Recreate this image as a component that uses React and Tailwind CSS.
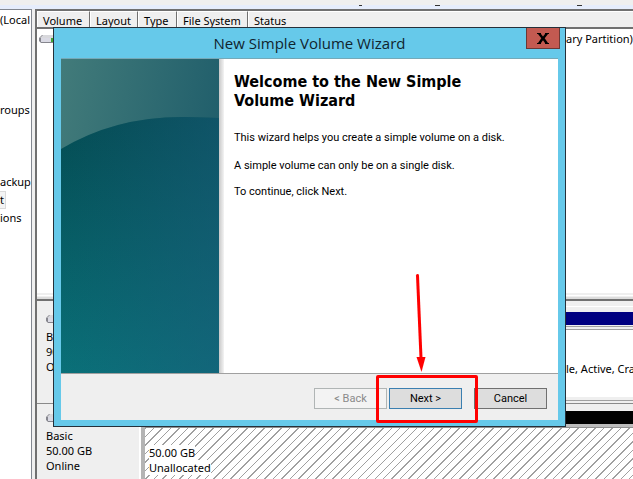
import React from "react";

const columns = [
  { label: "Volume", width: "w-[53px]" },
  { label: "Layout", width: "w-[48px]" },
  { label: "Type", width: "w-[39px]" },
  { label: "File System", width: "w-[71px]" },
];

const treeRows = ["(Local", "", "", "", "", "roups", "", "", "", "ackup", "t", "ions"];

function DiskIcon() {
  return (
    <svg width="20" height="10" viewBox="0 0 20 10" className="block shrink-0">
      <path d="M3 1h13l3 3v3l-2 2H2L0 7V4z" fill="#85858d" />
      <path d="M4 1h11l3 3H1z" fill="#d8d8dc" />
      <rect x="2" y="4" width="15" height="4" fill="#dadae4" />
      <rect x="12" y="4" width="2" height="4" fill="#3fa535" />
    </svg>
  );
}

function DiskLabel({ lines }) {
  return (
    <div className="w-[104px] shrink-0 border-r-2 border-white bg-[#efefef] pl-[9px] pt-2">
      <DiskIcon />
      <div className="mt-[5px]">
        {lines.map((l) => (
          <div key={l} className="h-[15px] leading-[15px]">{l}</div>
        ))}
      </div>
    </div>
  );
}

function DiskManagement() {
  return (
    <div className="flex min-h-screen flex-col bg-[#efefef]">
      <div className="flex h-[9px] shrink-0 flex-col">
        <div className="h-[5px] bg-[#efefef]" />
        <div className="flex h-1 bg-[#e6edfc]">
          <div className="ml-[359px] h-px w-[3px] bg-[#333]" />
          <div className="ml-[73px] h-px w-[5px] bg-[#333]" />
          <div className="ml-[137px] h-px w-[5px] bg-[#333]" />
        </div>
      </div>
      <div className="flex grow">
        <nav className="w-8 shrink-0 overflow-hidden border-r border-t border-[#828790] bg-white pt-px">
          {treeRows.map((r, i) => (
            <div key={i} className="flex h-[18px] w-[31px] overflow-hidden">
              <span
                className={
                  r === "t"
                    ? "h-[18px] w-[6px] border border-l-0 border-[#dadada] bg-[#f4f4f4] leading-4"
                    : "leading-[18px]"
                }
              >
                {r}
              </span>
            </div>
          ))}
        </nav>
        <main className="ml-[3px] flex min-w-0 grow flex-col border-l-2 border-t-2 border-[#707070]">
          <div className="flex h-[18px] shrink-0 border-b-2 border-[#707070] bg-[#efefef]">
            {columns.map((c) => (
              <div
                key={c.label}
                className={c.width + " shrink-0 border-l border-r border-t border-l-white border-r-[#707070] border-t-white pl-[5px] leading-[17px]"}
              >
                {c.label}
              </div>
            ))}
            <div className="grow border-l border-t border-white pl-[5px] leading-[17px]">Status</div>
          </div>
          <div className="flex h-[264px] shrink-0 justify-between bg-white">
            <div className="pl-[2px] pt-[5px]"><DiskIcon /></div>
            <div className="w-[67px] whitespace-nowrap pt-px leading-[18px]">ary Partition)</div>
          </div>
          <div className="h-2 shrink-0 border-b-2 border-[#707070] bg-[#efefef] pt-[2px]">
            <div className="h-px bg-white" />
            <div className="mt-px h-[2px] bg-[#dcdcdc]" />
          </div>
          <div className="flex h-[103px] shrink-0 border-b border-[#8a8a8a] pt-[5px]">
            <DiskLabel lines={["Basic", "90.00 GB", "Online"]} />
            <div className="flex grow flex-col border-t border-white pt-[5px]">
              <div className="h-[13px] bg-[#000080]" />
              <div className="mt-px h-px bg-[#a0a0a0]" />
              <div className="mt-[2px] h-[72px] overflow-hidden border-y border-[#a0a0a0]">
                <div className="flex h-[67px] items-center justify-end bg-white">
                  <span className="mt-3 w-[67px] shrink-0 whitespace-nowrap">le, Active, Crash Dump</span>
                </div>
              </div>
            </div>
          </div>
          <div className="flex grow pt-px">
            <DiskLabel lines={["Basic", "50.00 GB", "Online"]} />
            <div className="flex grow flex-col border-l-4 border-[#b4b4b4] pt-[6px]">
              <div className="h-[13px] bg-black" />
              <div className="h-1 border-b border-[#909090] bg-[#bcbcbc]" />
              <div className="grow bg-white bg-[repeating-linear-gradient(135deg,#a0a0a0_0px,#a0a0a0_1px,transparent_1px,transparent_6px)] pl-1 pt-[17px]">
                <div className="w-fit bg-white leading-[15px]">50.00 GB</div>
                <div className="w-fit bg-white leading-[15px]">Unallocated</div>
              </div>
            </div>
          </div>
        </main>
      </div>
    </div>
  );
}

function Banner() {
  return (
    <svg viewBox="0 0 158 314" preserveAspectRatio="none" className="block h-full w-[158px] shrink-0">
      <defs>
        <linearGradient id="top" x1="0" y1="0" x2="1" y2="0.3">
          <stop offset="0" stopColor="#427b7a" />
          <stop offset="1" stopColor="#205e6b" />
        </linearGradient>
        <linearGradient id="body" x1="0.5" y1="0" x2="0.5" y2="1">
          <stop offset="0" stopColor="#044c53" />
          <stop offset="1" stopColor="#0a7078" />
        </linearGradient>
        <linearGradient id="side" x1="0" y1="0" x2="1" y2="0">
          <stop offset="0" stopColor="#1b5c7c" stopOpacity="0" />
          <stop offset="1" stopColor="#1b5c7c" stopOpacity="0.5" />
        </linearGradient>
      </defs>
      <rect width="158" height="314" fill="url(#top)" />
      <path d="M0 90Q55 57 125 58L158 59V314H0z" fill="url(#body)" />
      <path d="M0 90Q55 57 125 58L158 59V314H0z" fill="url(#side)" />
    </svg>
  );
}

function Wizard() {
  const button = "h-[21px] w-[73px] border text-center leading-[18px]";
  return (
    <section
      role="dialog"
      aria-labelledby="wizard-title"
      className="absolute left-[53px] top-[27px] flex h-[400px] w-[513px] flex-col border border-[#25303a] bg-[#66c9ea] px-[7px] pb-[7px]"
    >
      <header className="relative flex h-[30px] shrink-0 items-center justify-center">
        <h1 id="wizard-title" className="font-['Open_Sans',sans-serif] text-[15px] leading-5 text-[#10242e]">New Simple Volume Wizard</h1>
        <button aria-label="Close" className="absolute -right-[2px] top-0 flex h-[21px] w-[34px] items-center justify-center border border-t-0 border-[#6b3835] bg-[#c35a51]">
          <svg width="12" height="11" viewBox="0 0 12 11">
            <path d="M0 0h4v1l2 2.500L8 1V0h4v1h-1L7.700 5.200 11 10h1v1H8v-1L6 7.200 4 10v1H0v-1h1l3.300-4.800L1 1H0z" fill="#000" />
          </svg>
        </button>
      </header>
      <div className="flex grow border-t border-[#75a9b8] bg-white">
        <Banner />
        <div className="w-[5px] shrink-0 bg-linear-to-r from-[#c8c8c8] to-[#f4f4f4]" />
        <div className="pl-[10px] pt-[13px] font-['Roboto',sans-serif] text-[11px]">
          <h2 className="w-[260px] font-['DejaVu_Sans_Condensed','DejaVu_Sans',sans-serif] text-[16px] font-bold leading-[19px] text-black">
            Welcome to the New Simple Volume Wizard
          </h2>
          <p className="mt-5 leading-4">This wizard helps you create a simple volume on a disk.</p>
          <p className="mt-3 leading-4">A simple volume can only be on a single disk.</p>
          <p className="mt-[10px] leading-4">To continue, click Next.</p>
        </div>
      </div>
      <footer className="flex h-[47px] shrink-0 justify-end border-t border-[#a0a0a0] bg-[#efefef] pr-[11px] pt-[14px] font-['Roboto',sans-serif] text-[11px]">
        <button disabled className={button + " border-[#b0b5b5] bg-[#f3f3f3] text-[#8a8a8a]"}>&lt; Back</button>
        <button className={button + " ml-[2px] border-[#3b7fb0] bg-[#dddddd]"}>Next &gt;</button>
        <button className={button + " ml-3 border-[#707070] bg-[#dddddd]"}>Cancel</button>
      </footer>
    </section>
  );
}

function Annotation() {
  return (
    <>
      <svg width="12" height="100" viewBox="0 0 12 100" className="absolute left-[415px] top-[273px]">
        <path d="M2.500 2.500L6 85" stroke="#f00" strokeWidth="3" strokeLinecap="round" />
        <path d="M1.500 84h9L6.500 99z" fill="#f00" />
      </svg>
      <div className="pointer-events-none absolute left-[376px] top-[375px] h-12 w-[102px] rounded-xs border-3 border-[#f00]" />
    </>
  );
}

export default function App() {
  return (
    <div className="relative min-h-screen overflow-hidden font-['Noto_Sans',sans-serif] text-[11px] text-black">
      <DiskManagement />
      <Wizard />
      <Annotation />
    </div>
  );
}
